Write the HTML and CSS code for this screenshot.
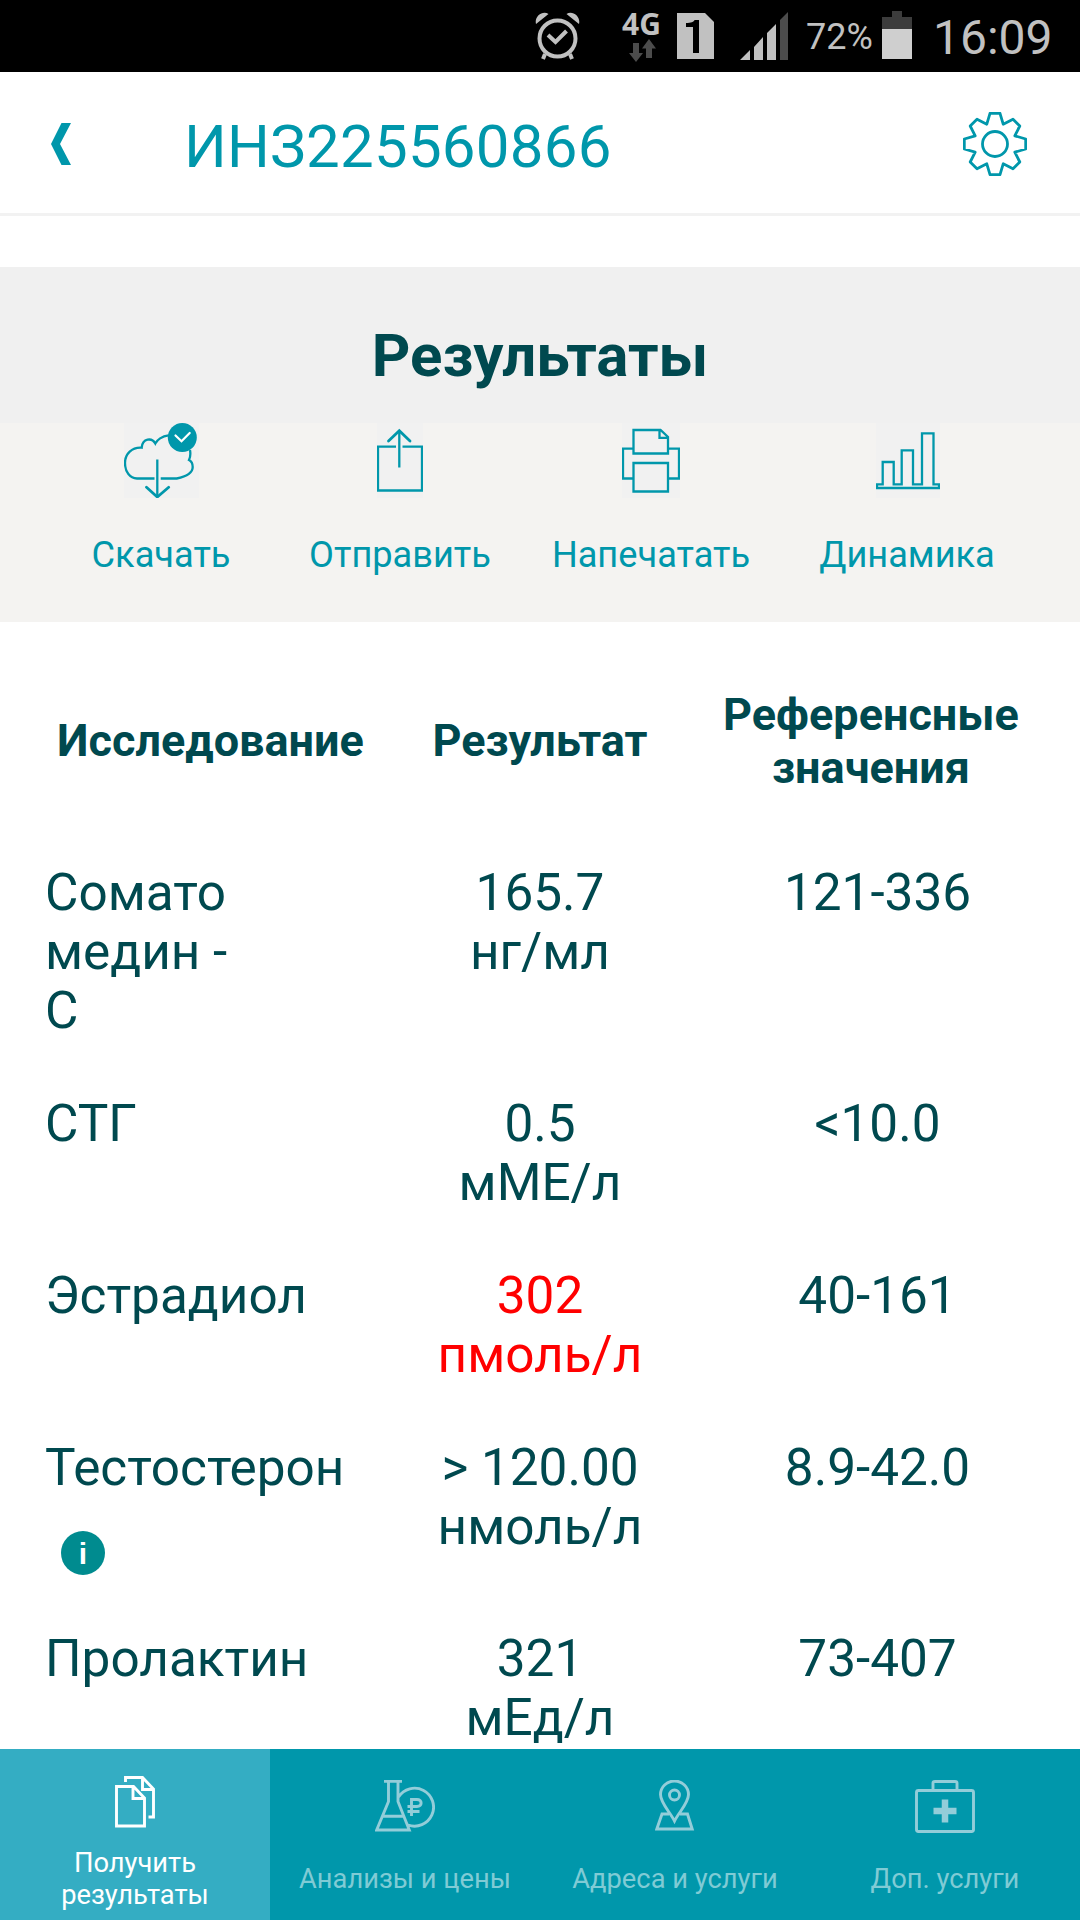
FILE: index.html
```
<!DOCTYPE html>
<html lang="ru">
<head>
    <meta charset="UTF-8">
    <meta name="viewport" content="width=device-width, initial-scale=1.0">
    <title>Результаты</title>
    <link rel="stylesheet" href="styles.css">
</head>
<body>

    <div class="status-bar">
        <svg class="alarm" width="46" height="48" viewBox="0 0 46 48">
            <circle cx="22.5" cy="26.5" r="18" fill="none" stroke="#c1c1c1" stroke-width="4"/>
            <path d="M13 23 L20.500 30 L31.500 19" fill="none" stroke="#c1c1c1" stroke-width="4"/>
            <path d="M1 12 C-1 4 8 -2 13.500 2 Z M44 12 C46 4 37 -2 31.500 2 Z" fill="#c1c1c1"/>
            <path d="M10 42 L8 47 M35 42 L37 47" stroke="#c1c1c1" stroke-width="4"/>
        </svg>
        <div class="network">
            <span>4G</span>
            <svg width="28" height="24" viewBox="0 0 28 24">
                <path d="M4 4 H10 V14 H14 L7 23 L0 14 H4 Z" fill="#4c4c4c"/>
                <path d="M17 19 V9.500 H13 L20 0 L27 9.500 H23 V19 Z" fill="#4c4c4c"/>
            </svg>
        </div>
        <svg class="sim" width="37" height="46" viewBox="0 0 37 46">
            <path d="M0 0 H28 L37 9 V46 H0 Z" fill="#c1c1c1"/>
            <path d="M16 40 V14 H9 V10 C14 10 17 9 17.500 7 H22 V40 Z" fill="#000"/>
        </svg>
        <svg class="signal" width="48" height="48" viewBox="0 0 48 48">
            <path d="M0 48 L10 38 V48 Z M14 35 L23 25 V48 H14 Z M27 21 L36 12 V48 H27 Z" fill="#c1c1c1"/>
            <path d="M40 8 L48 0 V48 H40 Z" fill="#4c4c4c"/>
        </svg>
        <span class="percent">72%</span>
        <svg class="battery" width="30" height="48" viewBox="0 0 30 48">
            <path d="M10 0 H20 V6 H30 V18 H0 V6 H10 Z" fill="#3c3c3c"/>
            <rect y="18" width="30" height="30" fill="#cfcfcf"/>
        </svg>
        <span class="clock">16:09</span>
    </div>

    <header>
        <svg class="back" width="20" height="42" viewBox="0 0 20 42">
            <path d="M10.500 0 H20 L9 21 L20 42 H10.500 L0 21 Z" fill="#0097ab"/>
        </svg>
        <h1>ИНЗ225560866</h1>
        <svg class="gear" width="64" height="64" viewBox="-32 -32 64 64">
            <path d="M-5 -30.700 H5 L8.200 -19.800 L18 -24.800 L24.800 -18 L19.800 -8.200 L30.700 -5 V5 L19.800 8.200 L24.800 18 L18 24.800 L8.200 19.800 L5 30.700 H-5 L-8.200 19.800 L-18 24.800 L-24.800 18 L-19.800 8.200 L-30.700 5 V-5 L-19.800 -8.200 L-24.800 -18 L-18 -24.800 L-8.200 -19.800 Z"/>
            <circle r="12.500"/>
        </svg>
    </header>

    <main>
        <h2>Результаты</h2>

        <div class="actions">
            <a class="action">
                <svg width="75" height="75" viewBox="0 0 75 75">
                    <path d="M44.500 12.300 C38 13 33 17 31.300 20.500 C28 14.500 18.500 15 17.700 24.700 C8 24 1 31 1 40 C1 49 6 55 13 55.500 H30.500 M36.700 55.500 H52.700 C60 54 68.700 51 68.700 44 C68.700 40 67 38 65 37 C66.500 34 66.700 31 66 27"/>
                    <path d="M33.300 36.500 V73"/>
                    <path class="bold" d="M22.500 64.300 L33.300 74 L44.700 64.300"/>
                    <circle cx="58.300" cy="14.500" r="14.500" fill="#0097ab" stroke="none"/>
                    <path class="tick" d="M51.500 12.500 L57.500 18.300 L65.700 10"/>
                </svg>
                <span>Скачать</span>
            </a>
            <a class="action">
                <svg width="46" height="75" viewBox="0 0 46 75">
                    <path d="M19 23.700 H1 V67.500 H45 V23.700 H25.500 M22.300 8 V44.500"/>
                    <path class="bold" d="M11.500 18 L22.300 7.800 L33 18"/>
                </svg>
                <span>Отправить</span>
            </a>
            <a class="action">
                <svg width="58" height="75" viewBox="0 0 58 75">
                    <path d="M11.500 30.500 V7 H38.500 L46 14 V30.500 Z M37.500 7 V14.800 H46 M11.500 25.700 H1 V55.500 H11.500 M46 25.700 H57 V55.500 H46 M11.500 40 H46 V68.500 H11.500 Z"/>
                </svg>
                <span>Напечатать</span>
            </a>
            <a class="action chart">
                <svg width="64" height="75" viewBox="0 0 64 75">
                    <path d="M1 65 V61.300 H6.700 V39 H17.700 V61.300 H25.700 V27.300 H37 V61.300 H46 V10.300 H57.500 V61.300 H63 V65 Z"/>
                </svg>
                <span>Динамика</span>
            </a>
        </div>

        <table>
            <thead>
                <tr>
                    <th>Исследование</th>
                    <th>Результат</th>
                    <th>Референсные<br>значения</th>
                </tr>
            </thead>
            <tbody>
                <tr>
                    <td>Сомато<br>медин -<br>С</td>
                    <td>165.7<br>нг/мл</td>
                    <td>121-336</td>
                </tr>
                <tr>
                    <td>СТГ</td>
                    <td>0.5<br>мМЕ/л</td>
                    <td>&lt;10.0</td>
                </tr>
                <tr>
                    <td>Эстрадиол</td>
                    <td class="alert">302<br>пмоль/л</td>
                    <td>40-161</td>
                </tr>
                <tr>
                    <td>Тестостерон<span class="info">i</span></td>
                    <td>&gt; 120.00<br>нмоль/л</td>
                    <td>8.9-42.0</td>
                </tr>
                <tr>
                    <td>Пролактин</td>
                    <td>321<br>мЕд/л</td>
                    <td>73-407</td>
                </tr>
            </tbody>
        </table>
    </main>

    <nav>
        <a class="tab active">
            <svg width="40" height="52" viewBox="0 0 40 52">
                <path d="M1.500 10.500 H18.500 L29.500 22 V50 H1.500 Z M18 10.500 V22.500 H29.500 M10.500 6 V1.500 H27.500 L38.500 13 V41 H33.500 M27.500 1.500 V13.500 H38.500"/>
            </svg>
            <span>Получить<br>результаты</span>
        </a>
        <a class="tab">
            <svg width="60" height="52" viewBox="0 0 60 52">
                <path d="M9 1.300 H27 M13.500 1.300 V21.500 L1.700 50 H34.300 L23 21.500 V1.300 M8 36.300 H28.500 M23.500 17 A19 19 0 1 1 33 45"/>
                <path d="M36.500 36 V19.500 H42 C47.500 19.500 47.500 26.500 42 26.500 H32.500 M32.500 31.500 H44.500"/>
            </svg>
            <span>Анализы и цены</span>
        </a>
        <a class="tab">
            <svg width="41" height="52" viewBox="0 0 41 52">
                <path d="M19.500 41 C15 32 5.500 23 5.500 14.500 A14 13.500 0 0 1 33.500 14.500 C33.500 23 24 32 19.500 41 Z M14 34 H7 L1.800 49 H37.200 L32.500 34 H25"/>
                <circle cx="19.500" cy="15" r="5"/>
            </svg>
            <span>Адреса и услуги</span>
        </a>
        <a class="tab">
            <svg width="60" height="54" viewBox="0 0 60 54">
                <rect x="1.500" y="10.500" width="57" height="41" rx="2"/>
                <path d="M18 10 V3 Q18 1.500 20 1.500 H40 Q42 1.500 42 3 V10"/>
                <path class="cross" d="M30 19.500 V42.500 M18.500 31 H41.500"/>
            </svg>
            <span>Доп. услуги</span>
        </a>
    </nav>

</body>
</html>
```
FILE: styles.css
```
* {
    box-sizing: border-box;
}
body {
    font-family: Roboto, "Liberation Sans", sans-serif;
    margin: 0;
    height: 1920px;
    display: flex;
    flex-direction: column;
    overflow: hidden;
    background: #fff;
    color: #00494f;
}
svg {
    display: block;
    flex: none;
}

/* phone status bar */
.status-bar {
    height: 72px;
    flex: none;
    display: flex;
    align-items: flex-start;
    justify-content: flex-end;
    padding: 11px 30px 0 0;
    background: #000;
    color: #c1c1c1;
    white-space: nowrap;
}
.alarm {
    margin: 1px 41px 0 0;
}
.network {
    width: 40px;
    margin-right: 15px;
    font: bold 30px/26px "Noto Sans", sans-serif;
}
.network span {
    display: block;
}
.network svg {
    margin: 2px 0 0 7px;
}
.sim {
    margin: 2px 26px 0 0;
}
.signal {
    margin: 1px 18px 0 0;
}
.percent {
    width: 76px;
    font-size: 36px;
    line-height: 53px;
}
.battery {
    margin-right: 21px;
}
.clock {
    width: 117px;
    font-size: 48px;
    line-height: 54px;
}

/* title bar */
header {
    height: 144px;
    flex: none;
    display: flex;
    align-items: center;
    padding: 2px 53px 0 51px;
    border-bottom: 3px solid #f2f2f2;
    color: #0097ab;
}
h1 {
    flex: 1;
    margin: 6px 0 0 113px;
    font-size: 60px;
    font-weight: 400;
    line-height: 70px;
    letter-spacing: 0.25px;
}
.gear {
    fill: none;
    stroke: #0097ab;
    stroke-width: 2.8;
    stroke-linejoin: round;
}

main {
    flex: 1;
    min-height: 0;
    padding-top: 51px;
    overflow: hidden;
}
h2 {
    height: 156px;
    margin: 0;
    padding-top: 54px;
    background: #f0f0f0;
    font-size: 60px;
    line-height: 70px;
    text-align: center;
}

/* result actions */
.actions {
    display: grid;
    grid-template-columns: 242px 236px 266px 246px;
    height: 199px;
    padding-left: 40px;
    background: #f4f3f1;
    color: #0097ab;
}
.action {
    display: flex;
    flex-direction: column;
    align-items: center;
    gap: 36px;
    font-size: 36.2px;
    line-height: 42px;
}
.action svg {
    background: #f1f1f1;
    fill: none;
    stroke: #0097ab;
    stroke-width: 2.3;
}
.chart svg {
    margin-left: 2px;
}
.action .bold {
    stroke-width: 2.8;
    stroke-linecap: round;
}
.action .tick {
    stroke: #fff;
    stroke-width: 2.2;
    stroke-linecap: round;
}

/* results table */
table {
    width: 1080px;
    table-layout: fixed;
    border-collapse: collapse;
    margin-top: 66px;
}
th {
    padding: 0 0 71px;
    font-size: 45px;
    line-height: 53px;
}
th:first-child {
    width: 376px;
    padding-left: 45px;
}
th:nth-child(2) {
    width: 328px;
}
th:last-child {
    padding: 0 42px 69px 0;
}
td {
    padding: 0 0 54px;
    font-size: 51.3px;
    line-height: 59px;
    text-align: center;
    vertical-align: top;
}
td:first-child {
    padding-left: 45px;
    text-align: left;
}
td:last-child {
    padding-right: 29px;
}
.alert {
    color: #f00;
}
.info {
    display: block;
    width: 44px;
    height: 44px;
    margin: 34px 0 0 16px;
    border-radius: 50%;
    background: #008b8f;
    color: #fff;
    font: bold 30px/45px "Liberation Sans", sans-serif;
    text-align: center;
}

/* bottom tabs */
nav {
    height: 171px;
    flex: none;
    display: flex;
    background: #0097ab;
}
.tab {
    flex: 1;
    display: flex;
    flex-direction: column;
    align-items: center;
    padding-top: 31px;
    color: #80cbd5;
    font-size: 27.3px;
    line-height: 32px;
    text-align: center;
}
.tab svg {
    fill: none;
    stroke: #93cdd9;
    stroke-width: 2.9;
}
.tab .cross {
    stroke-width: 6.5;
}
.tab span {
    height: 32px;
    margin: auto 0 25px;
}
.tab.active {
    padding-top: 27px;
    background: #34adc3;
    color: #fff;
}
.tab.active svg {
    stroke: #fff;
}
.tab.active span {
    height: 64px;
    margin-bottom: 9px;
}
```
